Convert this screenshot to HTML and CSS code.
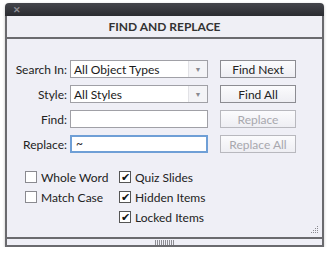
FILE: index.html
```html
<!DOCTYPE html>
<html>
<head>
<meta charset="utf-8">
<link rel="stylesheet" href="styles.css">
</head>
<body>
<div class="window">
  <div class="titlebar"><span class="close">✕</span></div>
  <div class="header">FIND AND REPLACE</div>
  <div class="content">
    <div class="form">
      <div class="row">
        <label class="lbl">Search In:</label>
        <div class="select"><span class="val">All Object Types</span><span class="arrow">▼</span></div>
        <button class="btn">Find Next</button>
      </div>
      <div class="row">
        <label class="lbl">Style:</label>
        <div class="select"><span class="val">All Styles</span><span class="arrow">▼</span></div>
        <button class="btn">Find All</button>
      </div>
      <div class="row">
        <label class="lbl">Find:</label>
        <div class="input"></div>
        <button class="btn disabled">Replace</button>
      </div>
      <div class="row">
        <label class="lbl">Replace:</label>
        <div class="input focus">~</div>
        <button class="btn disabled">Replace All</button>
      </div>
    </div>
    <div class="checks">
      <div class="col">
        <div class="chk"><span class="box"></span>Whole Word</div>
        <div class="chk"><span class="box"></span>Match Case</div>
      </div>
      <div class="col">
        <div class="chk"><span class="box on">✔</span>Quiz Slides</div>
        <div class="chk"><span class="box on">✔</span>Hidden Items</div>
        <div class="chk"><span class="box on">✔</span>Locked Items</div>
      </div>
    </div>
    <div class="grip">
      <svg width="9" height="9" viewBox="0 0 9 9">
        <g fill="#8a8a90">
          <rect x="7" y="1" width="1" height="1"/>
          <rect x="5" y="3" width="1" height="1"/><rect x="7" y="3" width="1" height="1"/>
          <rect x="3" y="5" width="1" height="1"/><rect x="5" y="5" width="1" height="1"/><rect x="7" y="5" width="1" height="1"/>
          <rect x="1" y="7" width="1" height="1"/><rect x="3" y="7" width="1" height="1"/><rect x="5" y="7" width="1" height="1"/><rect x="7" y="7" width="1" height="1"/>
        </g>
      </svg>
    </div>
  </div>
  <div class="footer"><span class="handle"></span></div>
</div>
</body>
</html>
```
FILE: styles.css
```css
html, body {
  margin: 0;
  padding: 0;
  background: #ffffff;
}
body {
  padding: 3px 0 0 5px;
  font-family: Lato, "Liberation Sans", sans-serif;
  font-size: 12px;
  color: #222;
}
.window {
  width: 319px;
  box-shadow: 0 1px 3px rgba(0,0,0,0.25);
  border-radius: 4px 4px 0 0;
}
.titlebar {
  height: 13px;
  background: linear-gradient(#45464c, #2a2b30);
  border-radius: 4px 4px 0 0;
  display: flex;
  align-items: center;
  padding-left: 8px;
}
.close {
  color: #8e8e94;
  font-size: 9px;
  font-weight: bold;
  line-height: 9px;
}
.header {
  height: 21px;
  background: #efeff5;
  border-left: 2px solid #6a6a6e;
  border-right: 2px solid #6a6a6e;
  border-bottom: 2px solid #6a6a6e;
  display: flex;
  align-items: center;
  justify-content: center;
  font-weight: bold;
  font-size: 12px;
  color: #333;
}
.content {
  background: #efeff6;
  border-left: 2px solid #6a6a6e;
  border-right: 2px solid #6a6a6e;
  height: 198px;
  position: relative;
  box-sizing: border-box;
  padding-top: 21px;
}
.form {
  display: flex;
  flex-direction: column;
  gap: 7px;
}
.row {
  display: flex;
  align-items: center;
  height: 18px;
}
.lbl {
  width: 60px;
  text-align: right;
  margin-right: 3px;
  color: #222;
  white-space: nowrap;
}
.select {
  width: 138px;
  height: 18px;
  box-sizing: border-box;
  border: 1px solid #a0a0a6;
  background: #fff;
  display: flex;
  align-items: center;
}
.select .val {
  flex: 1;
  padding-left: 3px;
  color: #1a1a1a;
  white-space: nowrap;
}
.select .arrow {
  width: 18px;
  height: 16px;
  background: #f4f4f7;
  border-left: 1px solid #e2e2e6;
  color: #8a8a90;
  font-size: 7px;
  display: flex;
  align-items: center;
  justify-content: center;
}
.input {
  width: 138px;
  height: 18px;
  box-sizing: border-box;
  border: 1px solid #a0a0a6;
  background: #fff;
  padding-left: 4px;
  line-height: 15px;
}
.input.focus {
  border: 2px solid #6f9fd6;
  padding-left: 4px;
  line-height: 13px;
}
.btn {
  margin-left: 12px;
  width: 76px;
  height: 18px;
  box-sizing: border-box;
  border: 1px solid #8c8c92;
  background: linear-gradient(#fbfbfd, #eeeef3);
  font-family: inherit;
  font-size: 12px;
  color: #222;
  padding: 0;
  white-space: nowrap;
}
.btn.disabled {
  color: #a8a8ae;
  border-color: #b8b8be;
}
.checks {
  display: flex;
  margin-top: 17px;
  padding-left: 18px;
  gap: 13px;
}
.col {
  display: flex;
  flex-direction: column;
  gap: 6px;
}
.col:first-child {
  width: 81px;
}
.chk {
  display: flex;
  align-items: center;
  height: 14px;
  color: #222;
  white-space: nowrap;
}
.box {
  width: 12px;
  height: 12px;
  box-sizing: border-box;
  border: 1px solid #8a8a90;
  background: #fff;
  margin-right: 4px;
  display: flex;
  align-items: center;
  justify-content: center;
  font-size: 11px;
  line-height: 10px;
  color: #111;
  flex: none;
}
.box.on {
  border-color: #555;
}
.grip {
  position: absolute;
  right: 3px;
  bottom: 3px;
  width: 9px;
  height: 9px;
  line-height: 0;
}
.footer {
  height: 6px;
  background: #efeff6;
  border: 2px solid #6a6a6e;
  display: flex;
  align-items: center;
  justify-content: center;
}
.handle {
  width: 19px;
  height: 5px;
  background: repeating-linear-gradient(90deg, #8e8e94 0 1px, transparent 1px 2px);
}
```
